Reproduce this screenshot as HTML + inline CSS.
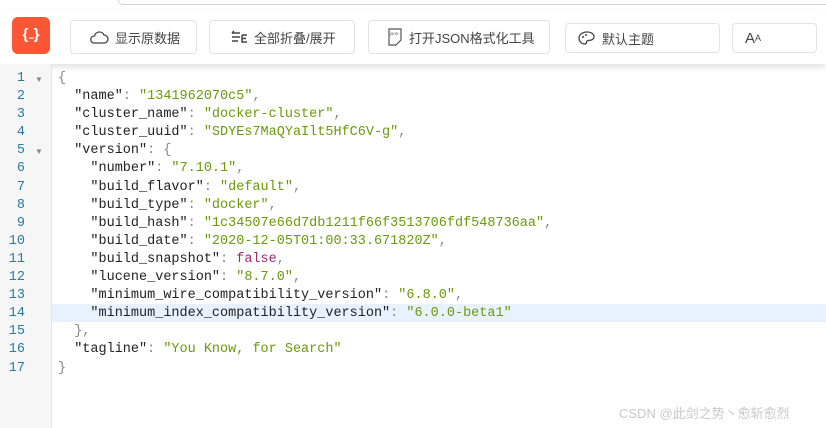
<!DOCTYPE html>
<html><head><meta charset="utf-8"><style>
*{margin:0;padding:0;box-sizing:border-box}
body{width:826px;height:428px;overflow:hidden;background:#fff;font-family:"Liberation Sans","Noto Sans CJK SC",sans-serif;position:relative}
.topline{position:absolute;left:118px;top:0;right:0;height:5px;border-bottom:1px solid #d4d4d4;border-left:1px solid #d4d4d4;border-bottom-left-radius:6px}
.bar{position:absolute;left:0;top:10px;width:826px;height:54px;background:#fff;box-shadow:0 3px 6px rgba(0,0,0,.12)}
.logo{position:absolute;left:12px;top:17px;width:38px;height:37px;background:#fd5634;border-radius:6px;color:#fff;font:bold 15px "Liberation Sans",sans-serif;text-align:center;line-height:35px}
.logo i{font-style:normal;font-size:10px;letter-spacing:-1px}
.btn{position:absolute;border:1px solid #e2e2e8;border-radius:4px;background:#fff;font-size:13px;color:#444;display:flex;align-items:center;padding-left:18px}
.btn svg{margin-right:6px}
.gutter{position:absolute;left:0;top:64px;width:52px;height:364px;background:#f6f6f6;border-right:1px solid #e4e4e4}
.hl{position:absolute;left:52px;top:304px;width:774px;height:18px;background:#e8f2ff}
.nums{position:absolute;left:0;top:70px;width:25px;text-align:right;font:13.5px/18.1px "Liberation Mono",monospace;color:#2b7a9e}
.fold{position:absolute;left:35px;font-size:8px;color:#888}
pre{position:absolute;left:58px;top:70px;font:13.5px/18.1px "Liberation Mono",monospace;color:#222}
.s{color:#6a9a0a}.p{color:#888}.b{color:#9b2a6e}
.wm{position:absolute;left:619px;top:403px;font-size:13px;color:#c8c8c8}
</style></head><body>
<div class="topline"></div>
<div class="bar"></div>
<div class="logo">{<i>...</i>}</div>
<div class="btn" style="left:70px;top:20px;width:127px;height:34px"><svg width="20" height="14" viewBox="0 0 20 14"><path d="M5 13h10a4 4 0 0 0 0-8 5 5 0 0 0-9.5 1A3.5 3.5 0 0 0 5 13z" fill="none" stroke="#444" stroke-width="1.3"/></svg>显示原数据</div>
<div class="btn" style="left:209px;top:20px;width:146px;height:34px;padding-left:20px"><svg width="18" height="14" viewBox="0 0 18 14"><path d="M2 3h8M2 3l2-2M2 7h8M2 11h6M12 5v7h5M12 8.5h4M12 5h5" stroke="#444" stroke-width="1.5" fill="none"/></svg>全部折叠/展开</div>
<div class="btn" style="left:368px;top:20px;width:182px;height:34px"><svg width="16" height="18" viewBox="0 0 16 18"><path d="M2 1h12v11l-5 5H2z" fill="none" stroke="#555" stroke-width="1.2"/><text x="3" y="7" font-size="4.5" fill="#555">json</text></svg>打开JSON格式化工具</div>
<div class="btn" style="left:565px;top:23px;width:155px;height:30px;padding-left:12px"><svg width="18" height="14" viewBox="0 0 18 14"><path d="M9 1C4 1 1 4 1 7s2 6 6 6c2 0 1-2 2-3s4 0 6-2 1-7-6-7z" fill="none" stroke="#444" stroke-width="1.3"/><circle cx="5" cy="6" r="1" fill="#444"/><circle cx="8" cy="4" r="1" fill="#444"/></svg>默认主题</div>
<div class="btn" style="left:732px;top:23px;width:85px;height:30px;padding-left:12px;font-size:15px;color:#444">A<span style="font-size:9px;vertical-align:top">A</span></div>
<div class="gutter"></div>
<div class="hl"></div>
<div class="nums">1<br>2<br>3<br>4<br>5<br>6<br>7<br>8<br>9<br>10<br>11<br>12<br>13<br>14<br>15<br>16<br>17</div>
<div class="fold" style="top:75px">▼</div>
<div class="fold" style="top:147px">▼</div>
<pre><span class="p">{</span>
  "name"<span class="p">: </span><span class="s">"1341962070c5"</span><span class="p">,</span>
  "cluster_name"<span class="p">: </span><span class="s">"docker-cluster"</span><span class="p">,</span>
  "cluster_uuid"<span class="p">: </span><span class="s">"SDYEs7MaQYaIlt5HfC6V-g"</span><span class="p">,</span>
  "version"<span class="p">: {</span>
    "number"<span class="p">: </span><span class="s">"7.10.1"</span><span class="p">,</span>
    "build_flavor"<span class="p">: </span><span class="s">"default"</span><span class="p">,</span>
    "build_type"<span class="p">: </span><span class="s">"docker"</span><span class="p">,</span>
    "build_hash"<span class="p">: </span><span class="s">"1c34507e66d7db1211f66f3513706fdf548736aa"</span><span class="p">,</span>
    "build_date"<span class="p">: </span><span class="s">"2020-12-05T01:00:33.671820Z"</span><span class="p">,</span>
    "build_snapshot"<span class="p">: </span><span class="b">false</span><span class="p">,</span>
    "lucene_version"<span class="p">: </span><span class="s">"8.7.0"</span><span class="p">,</span>
    "minimum_wire_compatibility_version"<span class="p">: </span><span class="s">"6.8.0"</span><span class="p">,</span>
    "minimum_index_compatibility_version"<span class="p">: </span><span class="s">"6.0.0-beta1"</span>
  <span class="p">},</span>
  "tagline"<span class="p">: </span><span class="s">"You Know, for Search"</span>
<span class="p">}</span></pre>
<div class="wm">CSDN @此剑之势丶愈斩愈烈</div>
</body></html>
